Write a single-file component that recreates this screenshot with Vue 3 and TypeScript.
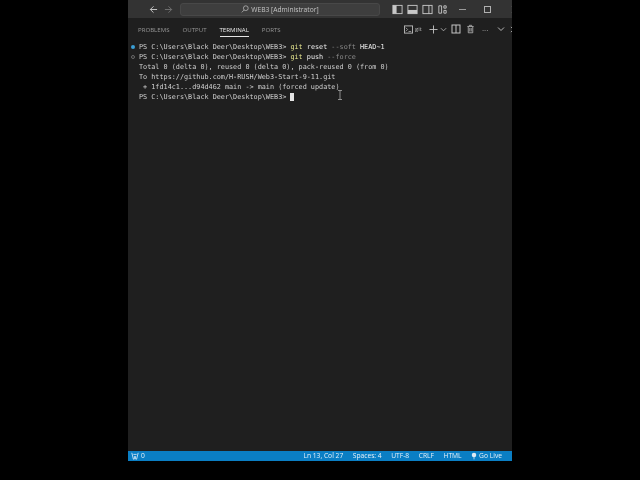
<script setup lang="ts">
const tabs = [
  { label: 'PROBLEMS', active: false },
  { label: 'OUTPUT', active: false },
  { label: 'TERMINAL', active: true },
  { label: 'PORTS', active: false },
]
</script>

<template>
  <div class="stage">
    <div class="window">
      <header class="titlebar">
        <div class="nav">
          <svg class="ic" viewBox="0 0 10 10"><path d="M9 5H1.5M5 1.5 1.5 5 5 8.5" fill="none" stroke="#d0d0d0" stroke-width="1"/></svg>
          <svg class="ic" viewBox="0 0 10 10"><path d="M1 5h7.5M5 1.5 8.5 5 5 8.5" fill="none" stroke="#757575" stroke-width="1"/></svg>
        </div>
        <div class="search">
          <svg class="search-ic" viewBox="0 0 10 10"><circle cx="6" cy="4" r="3" fill="none" stroke="#b5b5b5"/><path d="M4 6.2 1 9.2" stroke="#b5b5b5"/></svg>
          <span>WEB3 [Administrator]</span>
        </div>
        <div class="layouts">
          <svg class="lay" viewBox="0 0 12 12"><rect x="1" y="1.5" width="10" height="9" fill="none" stroke="#c8c8c8"/><rect x="1" y="1.5" width="4" height="9" fill="#c8c8c8"/></svg>
          <svg class="lay" viewBox="0 0 12 12"><rect x="1" y="1.5" width="10" height="9" fill="none" stroke="#c8c8c8"/><rect x="1" y="6.5" width="10" height="4" fill="#c8c8c8"/></svg>
          <svg class="lay" viewBox="0 0 12 12"><rect x="1" y="1.5" width="10" height="9" fill="none" stroke="#c8c8c8"/><path d="M7.5 1.5v9" stroke="#c8c8c8"/></svg>
          <svg class="lay" viewBox="0 0 12 12"><path d="M2 2h3v8H2zM7.5 2H10v2.5H7.5zM7.5 7H10v3H7.5z" fill="none" stroke="#c8c8c8"/></svg>
        </div>
        <div class="win-btns">
          <span class="minimize"></span>
          <span class="maximize"></span>
          <svg class="close" viewBox="0 0 8 8"><path d="M1 1l6 6M7 1 1 7" stroke="#c8c8c8"/></svg>
        </div>
      </header>

      <nav class="tabs">
        <span v-for="tab in tabs" :key="tab.label" class="tab" :class="{ active: tab.active }">{{ tab.label }}</span>
        <div class="tools">
          <svg class="tool-term" viewBox="0 0 10 10"><rect x=".5" y="1" width="9" height="8" fill="none" stroke="#bdbdbd"/><path d="M2 3l2 2-2 2M5 7.2h3" fill="none" stroke="#bdbdbd" stroke-width=".8"/></svg>
          <span class="git">git</span>
          <svg class="tool-plus" viewBox="0 0 10 10"><path d="M5 .5v9M.5 5h9" stroke="#c4c4c4"/></svg>
          <svg class="tool-chev" viewBox="0 0 8 8"><path d="M1 2.5 4 5.5 7 2.5" fill="none" stroke="#b0b0b0"/></svg>
          <svg class="tool-split" viewBox="0 0 10 10"><rect x="1" y="1" width="8" height="8" fill="none" stroke="#c4c4c4"/><path d="M5 1v8" stroke="#c4c4c4"/></svg>
          <svg class="tool-trash" viewBox="0 0 10 10"><path d="M1.5 2.2h7M3.7 2V.9h2.6V2M2.5 2.5V9.2h5V2.5M4.2 3.8v4M5.8 3.8v4" fill="none" stroke="#b8b8b8" stroke-width=".9"/></svg>
          <span class="dots">···</span>
          <svg class="tool-chev wide" viewBox="0 0 8 8"><path d="M1 2.5 4 5.5 7 2.5" fill="none" stroke="#b8b8b8"/></svg>
          <svg class="tool-close" viewBox="0 0 8 8"><path d="M1 1l6 6M7 1 1 7" stroke="#b8b8b8"/></svg>
        </div>
      </nav>

      <main class="terminal">
        <div class="line"><i class="dot blue"></i><span>PS C:\Users\Black Deer\Desktop\WEB3&gt; </span><span class="cmd">git</span><span class="bright"> reset </span><span class="flag">--soft </span><span class="bright">HEAD~1</span></div>
        <div class="line"><i class="dot ring"></i><span>PS C:\Users\Black Deer\Desktop\WEB3&gt; </span><span class="cmd">git</span><span class="bright"> push </span><span class="flag">--force</span></div>
        <div class="line">Total 0 (delta 0), reused 0 (delta 0), pack-reused 0 (from 0)</div>
        <div class="line">To https://github.com/H-RUSH/Web3-Start-9-11.git</div>
        <div class="line"> + 1fd14c1...d94d462 main -&gt; main (forced update)</div>
        <div class="line"><span>PS C:\Users\Black Deer\Desktop\WEB3&gt; </span><span class="cursor"></span></div>
        <svg class="ibeam" viewBox="0 0 6 10"><path d="M1 .5h4M3 .5v9M1 9.5h4" stroke="#a8a8a8" stroke-width=".8" fill="none"/></svg>
      </main>

      <footer class="status">
        <div class="status-left">
          <svg class="remote" viewBox="0 0 10 10"><path d="M1 1l2 8h1l1-4 1 4h1l2-8M3 3h4" fill="none" stroke="#e8f2fa" stroke-width="1"/></svg>
          <span>0</span>
        </div>
        <div class="status-right">
          <span>Ln 13, Col 27</span>
          <span>Spaces: 4</span>
          <span>UTF-8</span>
          <span>CRLF</span>
          <span>HTML</span>
          <span class="live">
            <svg class="bell" viewBox="0 0 8 10"><circle cx="4" cy="3.5" r="3" fill="#dfeaf3"/><path d="M4 6v3.5" stroke="#dfeaf3"/></svg>
            Go Live
          </span>
        </div>
      </footer>
    </div>
  </div>
</template>

<style>
html, body { margin: 0; background: #000; }
</style>

<style scoped>
.stage {
  width: 640px;
  height: 480px;
  background: #000;
  display: flex;
  justify-content: center;
  overflow: hidden;
}
.window {
  width: 384px;
  height: 461px;
  display: flex;
  flex-direction: column;
  background: #1f1f1f;
  overflow: hidden;
  font-family: "Open Sans", "Noto Sans", sans-serif;
  filter: blur(0.3px);
}
.titlebar {
  height: 18px;
  flex: none;
  background: #333333;
  display: flex;
  align-items: center;
  color: #c4c4c4;
}
.nav { display: flex; gap: 6px; margin-left: 21px; width: 31px; flex: none; }
.ic { width: 9px; height: 9px; flex: none; }
.search {
  width: 200px;
  height: 13px;
  box-sizing: border-box;
  background: #3e3e3e;
  border: 1px solid #484848;
  border-radius: 3px;
  display: flex;
  align-items: center;
  justify-content: center;
  gap: 2px;
  font-size: 6.7px;
  font-weight: 500;
  flex: none;
}
.search-ic { width: 8px; height: 8px; }
.layouts { display: flex; gap: 4px; margin-left: 12px; flex: none; }
.lay { width: 11px; height: 11px; }
.win-btns { display: flex; align-items: center; margin-left: 11px; flex: none; }
.minimize { width: 7px; height: 1px; background: #9a9a9a; }
.maximize { width: 5px; height: 5px; border: 1px solid #b0b0b0; margin-left: 18px; }
.close { width: 7px; height: 7px; margin-left: 20px; flex: none; }

.tabs {
  height: 21px;
  flex: none;
  display: flex;
  align-items: center;
  padding-left: 10px;
  gap: 13px;
  font-size: 6.1px;
  font-weight: 500;
  color: #969696;
  background: #1f1f1f;
}
.tab { line-height: 19px; height: 19px; margin-top: 2px; }
.tab.active { color: #e8e8e8; border-bottom: 1px solid #e4e4e4; height: 16px; line-height: 19px; margin-top: 0; }
.tools { margin-left: auto; display: flex; align-items: center; margin-top: 1px; }
.tool-term { width: 9px; height: 9px; }
.git { font-size: 6px; margin-left: 2px; color: #b5b5b5; }
.tool-plus { width: 9px; height: 9px; margin-left: 7px; }
.tool-chev { width: 7px; height: 7px; margin-left: 2px; }
.tool-split { width: 10px; height: 10px; margin-left: 4px; }
.tool-trash { width: 9px; height: 10px; margin-left: 5px; }
.dots { color: #b8b8b8; font-size: 8px; margin-left: 7px; width: 9px; }
.tool-chev.wide { width: 8px; height: 8px; margin-left: 6px; }
.tool-close { width: 7px; height: 7px; margin-left: 5px; margin-right: -5px; }

.terminal {
  flex: 1;
  position: relative;
  padding: 3px 0 0 11px;
  font-family: "DejaVu Sans Mono", monospace;
  font-size: 6.8px;
  line-height: 10px;
  color: #cfcfcf;
  white-space: pre;
}
.line { height: 10px; position: relative; }
.dot {
  position: absolute;
  left: -8px;
  top: 2.5px;
  width: 4px;
  height: 4px;
  border-radius: 50%;
  box-sizing: border-box;
}
.dot.blue { background: #3a9fd6; }
.dot.ring { border: 1px solid #6a6a6a; }
.cmd { color: #e5e58f; }
.bright { color: #ececec; }
.flag { color: #8a8a8a; }
.cursor {
  display: inline-block;
  width: 4px;
  height: 8px;
  background: #e4e4e4;
  vertical-align: -1.5px;
}
.ibeam { position: absolute; left: 209px; top: 51px; width: 6px; height: 10px; }

.status {
  height: 10px;
  flex: none;
  background: #0a7ec4;
  color: #e6f1f9;
  font-size: 6.7px;
  font-weight: 500;
  line-height: 10px;
  display: flex;
  justify-content: space-between;
  align-items: center;
}
.status-left { display: flex; align-items: center; gap: 2px; padding-left: 3px; }
.remote { width: 8px; height: 8px; }
.status-right { display: flex; gap: 9.5px; padding-right: 10px; }
.live { display: flex; align-items: center; gap: 2px; }
.bell { width: 6px; height: 8px; }
</style>
